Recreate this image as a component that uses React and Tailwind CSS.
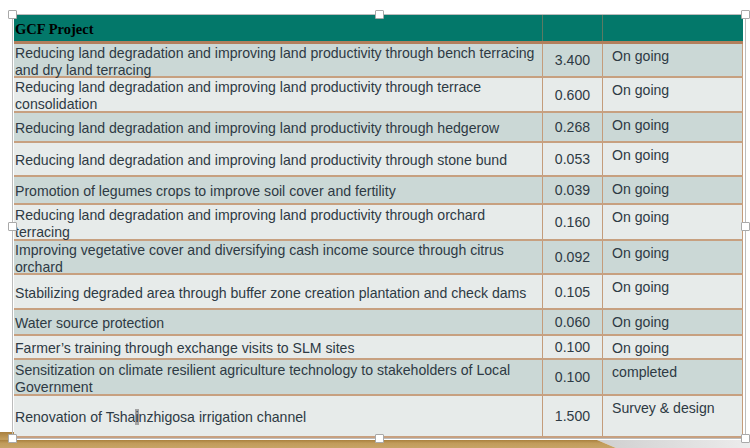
import React from 'react'

const rows = [
  { lines: ['Reducing land degradation and improving land productivity through bench terracing', 'and dry land terracing'], value: '3.400', status: 'On going', h: 'h-[34px]', dark: true },
  { lines: ['Reducing land degradation and improving land productivity through terrace', 'consolidation'], value: '0.600', status: 'On going', h: 'h-[35px]', dark: false },
  { lines: ['Reducing land degradation and improving land productivity through hedgerow'], value: '0.268', status: 'On going', h: 'h-[30px]', dark: true },
  { lines: ['Reducing land degradation and improving land productivity through stone bund'], value: '0.053', status: 'On going', h: 'h-[34px]', dark: false },
  { lines: ['Promotion of legumes crops to improve soil cover and fertility'], value: '0.039', status: 'On going', h: 'h-[28px]', dark: true },
  { lines: ['Reducing land degradation and improving land productivity through orchard', 'terracing'], value: '0.160', status: 'On going', h: 'h-[36px]', dark: false },
  { lines: ['Improving vegetative cover and diversifying cash income source through citrus', 'orchard'], value: '0.092', status: 'On going', h: 'h-[34px]', dark: true },
  { lines: ['Stabilizing degraded area through buffer zone creation plantation and check dams'], value: '0.105', status: 'On going', h: 'h-[35px]', dark: false },
  { lines: ['Water source protection'], value: '0.060', status: 'On going', h: 'h-[26px]', dark: true },
  { lines: ['Farmer\u2019s training through exchange visits to SLM sites'], value: '0.100', status: 'On going', h: 'h-[24px]', dark: false },
  { lines: ['Sensitization on climate resilient agriculture technology to stakeholders of Local', 'Government'], value: '0.100', status: 'completed', h: 'h-[36px]', dark: true },
  { lines: ['RENOVATION'], value: '1.500', status: 'Survey & design', h: 'h-[42px]', dark: false },
]

function Handle({ className }) {
  return (
    <div className={`absolute w-[9px] h-[9px] bg-white border border-[#a9a9a9] rounded-[1px] ${className}`} />
  )
}

function FirstCell({ lines }) {
  return (
    <div className="w-[529px] border-r border-[#c49c7b] flex flex-col justify-center leading-[17px] pl-px pt-[3px]">
      {lines.map((line, i) =>
        line === 'RENOVATION' ? (
          <span key={i} className="whitespace-nowrap">
            Renovation of Tsha<span className="bg-[#a3a3a3]">i</span>nzhigosa irrigation channel
          </span>
        ) : (
          <span key={i} className="whitespace-nowrap">{line}</span>
        )
      )}
    </div>
  )
}

export default function App() {
  return (
    <div className="relative w-[750px] h-[448px] overflow-hidden bg-white font-['Liberation_Sans',Arial,sans-serif]">
      {/* slide decoration at the bottom */}
      <svg className="absolute left-0 top-[430px]" width="750" height="18" viewBox="0 0 750 18">
        <defs>
          <linearGradient id="gold" x1="0" y1="0" x2="0" y2="1">
            <stop offset="0" stopColor="#a9803f" />
            <stop offset="0.4" stopColor="#c19b5a" />
            <stop offset="1" stopColor="#c7a466" />
          </linearGradient>
          <linearGradient id="grey" x1="0" y1="0" x2="1" y2="0">
            <stop offset="0" stopColor="#cfcfcf" />
            <stop offset="1" stopColor="#ececec" />
          </linearGradient>
        </defs>
        <rect x="0" y="2" width="14" height="16" fill="url(#gold)" />
        <polygon points="597,10 750,10 750,18 616,18" fill="url(#grey)" />
        <polygon points="0,10 597,10 616,18 0,18" fill="url(#gold)" />
      </svg>

      <div className="relative pt-[15px] pl-[14px] text-[14.1px] text-[#2e3a44]">
        <div className="w-[729px] flex flex-col">
          <div className="h-[29px] flex bg-[#03786a] border-b-[3px] border-[#b27f5c]">
            <div className="w-[529px] border-r border-[#5c7a63] flex items-center pt-[4px] pl-px font-['Liberation_Serif','Times_New_Roman',serif] font-bold text-black text-[14.5px]">
              GCF Project
            </div>
            <div className="w-[60px] border-r border-[#5c7a63]" />
            <div className="w-[140px]" />
          </div>
          {rows.map((row, i) => (
            <div
              key={i}
              className={`${row.h} flex border-b-2 border-[#c7a080] ${row.dark ? 'bg-[#cbd8d6]' : 'bg-[#e7ebea]'}`}
            >
              <FirstCell lines={row.lines} />
              <div className="w-[60px] border-r border-[#c49c7b] flex items-center justify-center pt-[2px]">
                {row.value}
              </div>
              <div className="w-[140px] border-r border-[#c49c7b] pl-[9px] pt-[4px] leading-[17px] whitespace-nowrap">
                {row.status}
              </div>
            </div>
          ))}
        </div>
      </div>

      {/* selection frame */}
      <div className="absolute left-[12px] top-[14px] w-[734px] h-[425px] border border-[#bcbcbc] pointer-events-none" />
      <Handle className="left-[8px] top-[10px]" />
      <Handle className="left-[375px] top-[10px]" />
      <Handle className="left-[741px] top-[10px]" />
      <Handle className="left-[8px] top-[222px]" />
      <Handle className="left-[741px] top-[222px]" />
      <Handle className="left-[8px] top-[434px]" />
      <Handle className="left-[375px] top-[434px]" />
      <Handle className="left-[741px] top-[434px]" />
    </div>
  )
}
